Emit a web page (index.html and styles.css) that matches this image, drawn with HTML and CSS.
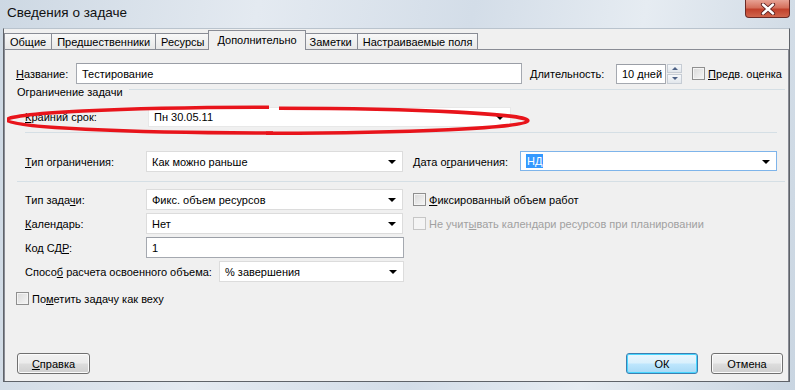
FILE: index.html
```html
<!DOCTYPE html>
<html lang="ru">
<head>
    <meta charset="UTF-8">
    <title>Сведения о задаче</title>
    <link rel="stylesheet" href="styles.css">
</head>
<body>
<div class="window">
    <div class="titlebar">
        <span class="title">Сведения о задаче</span>
        <div class="close-btn">
            <svg width="16" height="12" viewBox="0 0 16 12">
                <path d="M3 1.5 L13 10.5 M13 1.5 L3 10.5" stroke="#5a2020" stroke-width="4.2" stroke-linecap="round"/>
                <path d="M3 1.5 L13 10.5 M13 1.5 L3 10.5" stroke="#fff" stroke-width="2.4" stroke-linecap="round"/>
            </svg>
        </div>
    </div>

    <div class="client">
        <div class="tabs">
            <div class="tab">Общие</div>
            <div class="tab">Предшественники</div>
            <div class="tab">Ресурсы</div>
            <div class="tab active">Дополнительно</div>
            <div class="tab">Заметки</div>
            <div class="tab">Настраиваемые поля</div>
        </div>

        <div class="panel">
            <!-- пометка красным маркером поверх поля -->
            <svg class="marker" width="528" height="36" viewBox="0 0 528 36">
                <path d="M262 4.2 A258 12.6 0 0 0 266 30" fill="none" stroke="#e8141b" stroke-width="3.6"/>
                <path d="M272 5.2 A245 12 0 0 1 259 30.2" fill="none" stroke="#e8141b" stroke-width="3.6"/>
            </svg>

            <div class="row row-name">
                <span class="lbl lbl-name"><u>Н</u>азвание:</span>
                <div class="field field-name">Тестирование</div>
                <span class="lbl lbl-dur"><u>Д</u>лительность:</span>
                <div class="field field-dur">10 дней</div>
                <div class="spinner">
                    <div class="spin-half"><span class="spin-up"></span></div>
                    <div class="spin-half"><span class="spin-down"></span></div>
                </div>
                <label class="check check-est"><span class="box"></span><span><u>П</u>редв. оценка</span></label>
            </div>

            <div class="group-head">Ограничение задачи</div>

            <div class="row row-deadline">
                <span class="lbl lbl-deadline"><u>К</u>райний срок:</span>
                <div class="combo combo-deadline">Пн 30.05.11<span class="arrow"></span></div>
            </div>

            <div class="sep sep-inner"></div>

            <div class="row row-constraint">
                <span class="lbl lbl-left"><u>Т</u>ип ограничения:</span>
                <div class="combo combo-left">Как можно раньше<span class="arrow"></span></div>
                <span class="lbl lbl-date">Дата о<u>г</u>раничения:</span>
                <div class="combo combo-date focused"><span class="selected">НД</span><span class="arrow"></span></div>
            </div>

            <div class="sep sep-outer"></div>

            <div class="row row-task">
                <span class="lbl lbl-left">Тип зада<u>ч</u>и:</span>
                <div class="combo combo-left">Фикс. объем ресурсов<span class="arrow"></span></div>
                <label class="check check-right"><span class="box"></span><span><u>Ф</u>иксированный объем работ</span></label>
            </div>

            <div class="row row-task">
                <span class="lbl lbl-left"><u>К</u>алендарь:</span>
                <div class="combo combo-left">Нет<span class="arrow"></span></div>
                <label class="check check-right disabled"><span class="box"></span><span>Не учит<u>ы</u>вать календари ресурсов при планировании</span></label>
            </div>

            <div class="row row-task">
                <span class="lbl lbl-left">Код СД<u>Р</u>:</span>
                <div class="field field-wbs">1</div>
            </div>

            <div class="row row-task">
                <span class="lbl lbl-earned">Спосо<u>б</u> расчета освоенного объема:</span>
                <div class="combo combo-earned">% завершения<span class="arrow"></span></div>
            </div>

            <label class="check check-milestone"><span class="box"></span><span>По<u>м</u>етить задачу как веху</span></label>

            <div class="buttons">
                <div class="btn btn-help"><u>С</u>правка</div>
                <div class="btn btn-ok">ОК</div>
                <div class="btn btn-cancel">Отмена</div>
            </div>
        </div>
    </div>
</div>
</body>
</html>
```

FILE: styles.css
```css
body {
    margin: 0;
    padding: 0;
    font-family: "Liberation Sans", Arial, sans-serif;
    font-size: 11px;
    color: #000;
}

u {
    text-decoration: underline;
    text-underline-offset: 1px;
}

.window {
    width: 795px;
    height: 390px;
    background: linear-gradient(100deg, #cdd8e3 0%, #e4eaf1 30%, #d3dde8 55%, #e6ecf2 75%, #c9d5e1 100%);
    display: flex;
    flex-direction: column;
    overflow: hidden;
}

.titlebar {
    height: 28px;
    display: flex;
    align-items: flex-start;
    padding-left: 7px;
}

.title {
    font-size: 13.5px;
    margin-top: 5px;
    color: #111;
}

.close-btn {
    margin-left: auto;
    margin-right: 5px;
    width: 45px;
    height: 18px;
    box-sizing: border-box;
    border: 1px solid #6b2a25;
    border-top: none;
    border-radius: 0 0 4px 4px;
    background: linear-gradient(#e7a294 0%, #d5705c 45%, #c1412c 55%, #d0654c 100%);
    display: flex;
    align-items: center;
    justify-content: center;
}

.client {
    margin-left: 3px;
    width: 787px;
    height: 354px;
    box-sizing: border-box;
    border: 1px solid #5f6369;
    border-top: 1px solid #b9c3cd;
    background: #f0f0f0;
    padding-top: 1px;
    display: flex;
    flex-direction: column;
}

/* вкладки */
.tabs {
    display: flex;
    align-items: flex-end;
    height: 19px;
    position: relative;
    z-index: 1;
}

.tab {
    height: 16px;
    box-sizing: border-box;
    padding: 2px 5px 0 5px;
    border: 1px solid #898c95;
    border-bottom: none;
    margin-right: -1px;
    background: linear-gradient(#f8f8f8, #e8e8e8);
    white-space: nowrap;
    line-height: 13px;
}

.tab.active {
    height: 20px;
    margin-bottom: -1px;
    background: #f0f0f0;
    padding: 3px 8px 0 8px;
    margin-left: -1px;
    margin-right: -2px;
    position: relative;
}

.panel {
    flex: 1;
    position: relative;
    border: 1px solid #898c95;
    border-bottom: none;
    padding: 13px 0 7px 11px;
    display: flex;
    flex-direction: column;
}

.marker {
    position: absolute;
    left: 2px;
    top: 53px;
    z-index: 2;
}

.row {
    display: flex;
    align-items: center;
    height: 21px;
}

.lbl {
    white-space: nowrap;
}

.field, .combo {
    height: 21px;
    box-sizing: border-box;
    background: #fff;
    display: flex;
    align-items: center;
    padding-left: 5px;
    white-space: nowrap;
}

.field {
    border: 1px solid #a5a9b0;
    border-top-color: #9a9ea6;
}

.combo {
    border: 1px solid #dcdcdc;
    position: relative;
}

.combo.focused {
    border-color: #7eb4ea;
}

.arrow {
    position: absolute;
    right: 6px;
    top: 8px;
    width: 0;
    height: 0;
    border-left: 4px solid transparent;
    border-right: 4px solid transparent;
    border-top: 4px solid #000;
}

.selected {
    background: #3399ff;
    color: #fff;
    padding: 1px 1px;
}

/* строка названия */
.lbl-name {
    width: 60px;
}

.field-name {
    width: 446px;
}

.lbl-dur {
    margin-left: 8px;
    width: 86px;
}

.field-dur {
    width: 50px;
    height: 20px;
}

.spinner {
    width: 15px;
    height: 20px;
    margin-left: 1px;
    display: flex;
    flex-direction: column;
    gap: 1px;
}

.spin-half {
    flex: 1;
    border: 1px solid #c6ccd4;
    background: linear-gradient(#f6f8fa, #e2e7ec);
    display: flex;
    align-items: center;
    justify-content: center;
}

.spin-up, .spin-down {
    width: 0;
    height: 0;
    border-left: 3px solid transparent;
    border-right: 3px solid transparent;
}

.spin-up {
    border-bottom: 3px solid #4d6185;
}

.spin-down {
    border-top: 3px solid #4d6185;
}

.check {
    display: flex;
    align-items: center;
    white-space: nowrap;
}

.box {
    width: 13px;
    height: 13px;
    box-sizing: border-box;
    border: 1px solid #8f8f8f;
    background: linear-gradient(135deg, #d9d9d9, #f6f6f6);
    box-shadow: inset 0 0 0 1px #f4f4f4;
    margin-right: 3px;
}

.check.disabled {
    color: #a0a0a0;
}

.check.disabled .box {
    border-color: #c6c6c6;
    background: #f4f4f4;
    box-shadow: none;
}

.check-est {
    margin-left: 10px;
}

/* группа ограничений */
.group-head {
    margin-top: 2px;
    margin-left: 1px;
    margin-right: 3px;
    height: 13px;
    display: flex;
    align-items: flex-start;
    line-height: 13px;
    white-space: nowrap;
}

.group-head::after {
    content: "";
    flex: 1;
    margin-top: 3px;
    margin-left: 6px;
    border-top: 1px solid #d5dfe5;
}

.row-deadline {
    margin-top: 8px;
    margin-left: 9px;
    height: 20px;
}

.lbl-deadline {
    width: 123px;
}

.combo-deadline {
    width: 363px;
    height: 20px;
    border-color: #e8e8e8;
}

.sep {
    border-top: 1px solid #d5dfe5;
}

.sep-inner {
    margin: 5px 11px 0 9px;
}

.sep-outer {
    margin: 9px 3px 0 1px;
}

.row-constraint {
    margin-top: 18px;
    margin-left: 9px;
}

.lbl-left {
    width: 121px;
}

.combo-left {
    width: 257px;
}

.lbl-date {
    margin-left: 10px;
    width: 107px;
}

.combo-date {
    width: 257px;
    height: 20px;
    align-self: flex-start;
}

.row-task {
    margin-left: 9px;
    margin-top: 3px;
}

.sep-outer + .row-task {
    margin-top: 7px;
}

.check-right {
    margin-left: 10px;
}

.field-wbs {
    width: 258px;
}

.lbl-earned {
    width: 194px;
}

.combo-earned {
    width: 185px;
}

.check-milestone {
    margin-top: 10px;
}

/* кнопки */
.buttons {
    margin-top: auto;
    display: flex;
    gap: 13px;
    margin-right: 5px;
    margin-left: 1px;
}

.btn {
    width: 73px;
    height: 21px;
    box-sizing: border-box;
    border: 1px solid #707070;
    border-radius: 3px;
    background: linear-gradient(#f2f2f2 0%, #ebebeb 48%, #dddddd 52%, #cfcfcf 100%);
    box-shadow: inset 0 0 0 1px #fbfbfb;
    display: flex;
    align-items: center;
    justify-content: center;
}

.btn-help {
    margin-right: auto;
}

.btn-ok {
    width: 72px;
    border-color: #3c7fb1;
    background: linear-gradient(#eaf6fd 0%, #d9f0fc 48%, #bee6fd 52%, #a7d9f5 100%);
    box-shadow: inset 0 0 0 1px #48d6ff;
}

.btn-cancel {
    width: 72px;
}
```
